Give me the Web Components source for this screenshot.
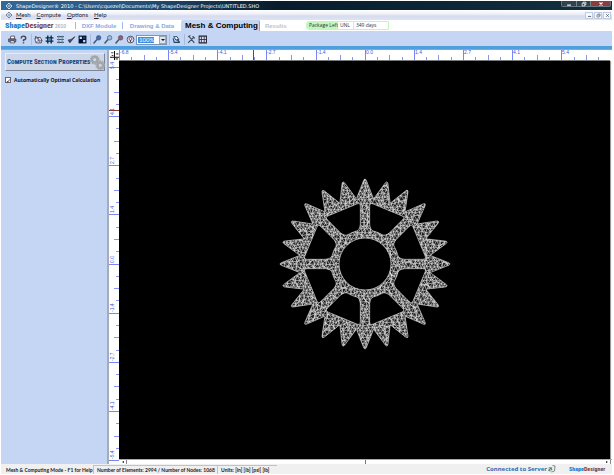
<!DOCTYPE html>
<html lang="en">
<head>
<meta charset="utf-8">
<title>ShapeDesigner 2010</title>
<style>
html,body{height:100%}
body{margin:0;background:#fff;font:6px/8px Lato,"Open Sans",sans-serif;color:#223}
</style>
</head>
<body>
<sd-app></sd-app>
<script>
const ICONS={
app:'<path d="M8 2 L10 5 14 8 11 11 8 14 5 11 2 8 5 5Z" fill="none" stroke="currentColor" stroke-width="1.6"/><circle cx="8" cy="8" r="2" fill="none" stroke="currentColor"/>',
print:'<path d="M5 2h7l-1 5H4Z" fill="#fff" stroke="#334" stroke-width="1.3"/><path d="M1 7h13v5H1Z" fill="#778" stroke="#223"/><path d="M4 10h7l1 4H4Z" fill="#dde" stroke="#223"/>',
help:'<path d="M4 6Q4 2 8 2t4 4Q12 8 8 9v2M8 13v2" fill="none" stroke="#445" stroke-width="2.6"/>',
mesh:'<path d="M3 2l3 3 5-1 3 5-1 5H4L2 9Z" fill="#eef" stroke="#445" stroke-width="1.5"/><path d="M1 7l6-3 2 5 6 1M3 14l5-5 4 4M5 4l5 9" fill="none" stroke="#445" stroke-width="1.2"/>',
grid:'<path d="M5 1v14M11 1v14M1 5h14M1 11h14" stroke="#123" stroke-width="2.4"/><path d="M6 6h4v4H6z" fill="#38c"/>',
lines:'<path d="M2 3h12M2 8h12M2 13h12" stroke="#456" stroke-width="2.2"/><path d="M5 1v14M11 1v14" stroke="#68a" stroke-width="1.5"/>',
check:'<path d="M2 9l3 5 9-11-7 5Z" fill="#445" stroke="#445" stroke-width="1.5"/>',
blocks:'<path d="M1 1h14v14H1z" fill="#001133"/><path d="M3 3h4v4H3zM9 9h4v4H9z" fill="#bde"/><path d="M9 3h4v4H9z" fill="#246"/>',
zin:'<circle cx="10" cy="5" r="4" fill="#3a6fc0" stroke="#345"/><path d="M7 8L1 15" stroke="#456" stroke-width="2.6"/>',
zout:'<circle cx="10" cy="5" r="4" fill="#9bd" stroke="#345"/><path d="M7 8L1 15" stroke="#456" stroke-width="2.6"/>',
zwin:'<circle cx="10" cy="5" r="4" fill="#867" stroke="#534"/><path d="M7 8L1 15" stroke="#456" stroke-width="2.6"/>',
fit:'<circle cx="8" cy="8" r="6" fill="#eef" stroke="#445" stroke-width="1.6"/><circle cx="8" cy="7" r="2.6" fill="none" stroke="#445" stroke-width="1.4"/><path d="M8 9v4" stroke="#445" stroke-width="2"/>',
run:'<path d="M3 3h6l3 5-5 1Z" fill="#fff" stroke="#246" stroke-width="1.7"/><path d="M2 6l2 7h10M9 8l4 4" fill="none" stroke="#246" stroke-width="2"/>',
tools:'<path d="M2 14L12 4M4 3l9 11M2 3l4-2M10 2l4 4" stroke="#456" stroke-width="2.2" fill="none"/>',
table:'<path d="M2 2h13v12H2z" fill="#dde6f6" stroke="#223" stroke-width="1.8"/><path d="M2 8h13M6 2v12M11 2v12" stroke="#334" stroke-width="1.6"/>',
gears:'<g fill="none" stroke="#a3a5a8"><circle cx="5" cy="5" r="3" stroke-width="2.6"/><circle cx="5" cy="5" r="4.6" stroke-width="1.4" stroke-dasharray="1.6 1.3"/><circle cx="11" cy="11" r="3" stroke-width="2.6"/><circle cx="11" cy="11" r="4.6" stroke-width="1.4" stroke-dasharray="1.6 1.3"/></g>',
origin:'<path d="M8 0v16M0 11h16" stroke="#111" stroke-width="1.8"/><path d="M2 3h4M11 5h4M3 8h3M10 14h4" stroke="#444" stroke-width="2"/>',
server:'<path d="M2 5h8v7H2z" fill="#cdd" stroke="#567"/><path d="M9 1l5 1-1 10-6 2" fill="#eee" stroke="#456" stroke-width="1.3"/><path d="M1 12l5-6 2 4" stroke="#262" fill="none" stroke-width="1.6"/>',
min:'<path d="M3 11h10" stroke="currentColor" stroke-width="3"/>',
max:'<path d="M3 6h7v7H3zM6 6V3h7v7h-3" fill="none" stroke="currentColor" stroke-width="2"/>',
close:'<path d="M4 4l8 8M12 4l-8 8" stroke="currentColor" stroke-width="3"/>'
};
const define=(name,html,setup)=>customElements.define(name,class extends HTMLElement{
  connectedCallback(){
    if(this.shadowRoot)return;
    const t=document.createElement('template');
    t.innerHTML='<style>*{box-sizing:border-box}button{font:inherit;color:inherit;border:0;background:none;padding:0;margin:0;white-space:nowrap}</style>'+html;
    this.attachShadow({mode:'open'}).append(t.content.cloneNode(true));
    if(setup)setup(this,this.shadowRoot);
  }
});

define('sd-icon','<style>:host{display:inline-block;flex:none;width:8px;height:8px}svg{display:block;width:100%;height:100%}</style><svg viewBox="0 0 16 16" aria-hidden="true"></svg>',
(el,r)=>{r.querySelector('svg').innerHTML=ICONS[el.getAttribute('name')];});

define('sd-logo',`<style>:host{display:inline-block;font:bold 8px/10px "Liberation Sans Narrow","Roboto Condensed","Liberation Sans",sans-serif;white-space:nowrap;color:#743c42}b{color:#2b80cb}</style><b>Shape</b>Designer`);

define('sd-titlebar',`<style>
:host{display:flex;align-items:center;height:9px;padding:0 1px 0 4px;gap:3px;background:linear-gradient(90deg,#33689a 0,#275681 20%,#153450 34%,#081c2c 45%,#0c2534 70%,#14303f);color:#fff}
span{flex:1;white-space:nowrap;overflow:hidden;font:5px/8px "DejaVu Sans",sans-serif}
div{display:flex;align-self:flex-start;height:6px;border:1px solid #647681;border-top:0;border-radius:0 0 2px 2px}
button{width:14px;height:5px;display:grid;place-items:center;background:#33434d}
button+button{border-left:1px solid #78868e}
button:last-child{width:20px;background:#8d3c3b}
div sd-icon{width:6px;height:6px}
</style><sd-icon name="app"></sd-icon><span>ShapeDesigner® 2010 - C:\\Users\\cquezel\\Documents\\My ShapeDesigner Projects\\UNTITLED.SHO</span>
<div><button aria-label="Minimize"><sd-icon name="min"></sd-icon></button><button aria-label="Restore"><sd-icon name="max"></sd-icon></button><button aria-label="Close"><sd-icon name="close"></sd-icon></button></div>`);

define('sd-menubar',`<style>
:host{display:flex;align-items:center;height:10px;padding:0 1px 0 4px;background:linear-gradient(#fff,#eef0f8 40%,#d6dcee 60%,#dfe4f3);color:#223}
nav{flex:1;display:flex;gap:6px;padding-left:3px}
u{text-underline-offset:1px}
.w{display:flex;gap:1px}.w button{display:grid;place-items:center;width:8px;height:7px;background:#f6f9ff;border:1px solid #c1cbe0;color:#567}
.w sd-icon{width:5px;height:5px}
</style><sd-icon name="app" style="color:#568"></sd-icon><nav><button><u>M</u>esh</button><button><u>C</u>ompute</button><button><u>O</u>ptions</button><button><u>H</u>elp</button></nav>
<div class="w"><button aria-label="Minimize window"><sd-icon name="min"></sd-icon></button><button aria-label="Restore window"><sd-icon name="max"></sd-icon></button><button aria-label="Close window"><sd-icon name="close"></sd-icon></button></div>`);

define('sd-tabs',`<style>
:host{display:flex;align-items:center;height:11px;padding-left:4px;background:#fff;white-space:nowrap;font:bold 6px/8px "Liberation Sans",sans-serif;color:#86abe6}
sd-logo{width:50px}
.y{width:20px;color:#b5b5b5;font:bold 5px/8px "Liberation Sans Narrow","Liberation Sans",sans-serif}
.s{width:1px;height:7px;background:#9dbbe9}
.t{height:11px}
.t.a{align-self:stretch;padding:0 1px 0 4px;font-size:8px;color:#000;background:#c5d6f4;border-radius:2px 2px 0 0;border-right:1px solid #6cb0e8}
.t.off{color:#c4c4c4;width:21px}
.p{display:flex;height:9px;margin-left:20px;font:5px/7px "Open Sans",sans-serif;color:#333;background:#c3f6bf;border-radius:4px 1px 1px 4px;padding:1px;padding-left:3px}
.p span{background:#fff;padding:0 2px;margin-left:1px;width:15px}
.p span+span{width:34px}
.p i{font-style:normal;width:28px}
</style><sd-logo></sd-logo><span class="y">2010</span><span class="s"></span><button class="t" style="width:46px">DXF Module</button><span class="s"></span><button class="t" style="width:58px">Drawing &amp; Data</button><button class="t a">Mesh &amp; Computing</button><button class="t off" style="margin-left:5px">Results</button>
<div class="p"><i>Package Left</i><span>UNL</span><span>349 days</span></div>`);

define('sd-toolbar',`<style>
:host{display:flex;align-items:center;height:15px;padding:2px 0 0 6px;background:#c5d6f4}
button{display:grid;place-items:center;width:11px;height:11px}
sd-icon{width:9px;height:9px}
.g{display:flex}.g+.g{border-left:1px solid #a9bbdd;margin-left:2px;padding-left:1px}
select{appearance:none;width:31px;height:10px;border:1px solid #7e93b8;border-radius:0;padding:0 0 0 2px;margin:0;font:6px/8px Lato,"Open Sans",sans-serif;color:#fff;background:linear-gradient(#3f8bdc,#3f8bdc) 1px 1px/16px 6px no-repeat,#fff}
.z{display:grid;grid-template:1fr/1fr auto;align-items:center}
.z select{grid-area:1/1/2/3}.z i{grid-area:1/2;width:7px;height:8px;margin-right:1px;background:#dfe5ee;border:1px solid #9aa;display:grid;place-items:center;pointer-events:none}
.z i::after{content:"";border:2px solid transparent;border-top-color:#111;border-bottom:0}
</style>
<div class="g"><button aria-label="Print"><sd-icon name="print"></sd-icon></button><button aria-label="Help"><sd-icon name="help"></sd-icon></button></div>
<div class="g"><button aria-label="Mesh"><sd-icon name="mesh"></sd-icon></button><button aria-label="Grid"><sd-icon name="grid"></sd-icon></button><button aria-label="Lines"><sd-icon name="lines"></sd-icon></button><button aria-label="Check"><sd-icon name="check"></sd-icon></button><button aria-label="Colors"><sd-icon name="blocks"></sd-icon></button></div>
<div class="g"><button aria-label="Zoom in"><sd-icon name="zin"></sd-icon></button><button aria-label="Zoom out"><sd-icon name="zout"></sd-icon></button><button aria-label="Zoom window"><sd-icon name="zwin"></sd-icon></button><button aria-label="Fit"><sd-icon name="fit"></sd-icon></button><label class="z"><select aria-label="Zoom"><option>100%</option></select><i></i></label></div>
<div class="g"><button aria-label="Compute"><sd-icon name="run"></sd-icon></button></div>
<div class="g"><button aria-label="Settings"><sd-icon name="tools"></sd-icon></button><button aria-label="Table"><sd-icon name="table"></sd-icon></button></div>`);

define('sd-sidebar',`<style>
:host{display:block;width:108px;padding:3px 2px 0 4px;background:#c5d6f4;border-right:2px solid #a4acb9}
.h{display:flex;align-items:center;justify-content:space-between;width:100%;height:18px;padding:0 1px;background:#ccd6e6;border:1px solid #e4ecf8;border-right-color:#7d8797;border-bottom-color:#7d8797;color:#22477f;font:bold small-caps 7px/10px "Liberation Sans Narrow","Roboto Condensed","Liberation Sans",sans-serif}
.h sd-icon{width:15px;height:15px}
label{display:flex;align-items:center;gap:3px;margin-top:6px;font:bold 5px/6px "Open Sans",sans-serif;color:#112;white-space:nowrap}
input{appearance:none;width:6px;height:6px;margin:0;border:1px solid #667;background:#fff;display:grid;place-items:center}
input:checked::after{content:"✓";font:bold 6px/6px "DejaVu Sans";color:#000}
</style><button class="h"><span>Compute Section Properties</span><sd-icon name="gears"></sd-icon></button>
<label><input type="checkbox" checked>Automatically Optimal Calculation</label>`);

define('sd-ruler',`<style>:host{display:block;overflow:hidden;background:#fff;min-width:0;min-height:0;contain:strict}svg{display:block;overflow:visible}text{font:5px "Liberation Sans",sans-serif;fill:#4456dc}</style><svg width="10" height="10"></svg>`,
(el,r)=>{
  const v=el.hasAttribute('vertical'),first=+el.getAttribute('first'),labels=el.getAttribute('labels').split(' ');
  let s='';
  const line=(p,a,c)=>v?`<rect x="${10-a}" y="${p}" width="${a}" height="1" fill="${c}"/>`:`<rect x="${p}" y="${10-a}" width="1" height="${a}" fill="${c}"/>`;
  for(let i=0;i<160;i++){
    const p=Math.round(first+i*49.15/4);
    s+=line(p,i%4===0?10:i%2===0?5:3,i%4===0?'#7885f2':'#8994f0');
    if(i%4===0&&labels[i/4])s+=v?`<text transform="translate(5 ${Math.max(p-1,8)}) rotate(-90)">${labels[i/4]}</text>`:`<text x="${p+1}" y="4">${labels[i/4]}</text>`;
  }
  s+=line(+el.getAttribute('cursor'),10,'#8c3940');
  r.querySelector('svg').innerHTML=s;
});

define('sd-gear',`<style>:host{display:block}svg{display:block;width:174px;height:174px}</style>
<svg viewBox="-87 -87 174 174" role="img" aria-label="Meshed gear section"></svg>`,
(el,r)=>{
  const P=(a,d)=>[Math.sin(a)*d,-Math.cos(a)*d],f=p=>p[0].toFixed(2)+' '+p[1].toFixed(2),D=Math.PI/180;
  let shape='';
  for(let i=0;i<24;i++){
    const a=i*15*D;
    shape+=(i?'L':'M')+f(P(a-6.9*D,67))+'L'+f(P(a-1.1*D,83))+'Q'+f(P(a,87))+' '+f(P(a+1.1*D,83))+'L'+f(P(a+6.9*D,67))+'Q'+f(P(a+7.5*D,65.5))+' '+f(P(a+8.1*D,67));
  }
  shape+='Z';
  for(let k=0;k<8;k++){
    const c=(k*45+22.5)*D,h=(o,d)=>P(c+o*D,d);
    shape+='M'+f(h(-15.8,40))+'L'+f(h(-17.9,58))+'Q'+f(h(-18,62))+' '+f(h(-14.5,60.5))+'L'+f(h(14.5,60.5))+'Q'+f(h(18,62))+' '+f(h(17.9,58))+'L'+f(h(15.8,40))+'Q'+f(h(13.5,34))+' '+f(h(8,34))+'A34 34 0 0 0 '+f(h(-8,34))+'Q'+f(h(-13.5,34))+' '+f(h(-15.8,40))+'Z';
  }
  shape+='M26 0A26 26 0 1 0 -26 0A26 26 0 1 0 26 0Z';
  let seed=7;const rnd=()=>(seed=(seed*16807)%2147483647)/2147483647-.5;
  const n=56,s=3.2,g=[];
  for(let y=0;y<n;y++){g.push([]);for(let x=0;x<n;x++)g[y].push([(x-n/2+(y%2)/2)*s+rnd()*2.8,(y-n/2)*s+rnd()*2.8]);}
  let m='';
  for(let y=0;y<n-1;y++)for(let x=1;x<n-1;x++){
    const o=y%2;m+='M'+f(g[y][x])+'L'+f(g[y][x+1])+'M'+f(g[y+1][x+o-1])+'L'+f(g[y][x])+'L'+f(g[y+1][x+o]);
  }
  r.querySelector('svg').innerHTML=`<defs><clipPath id="c"><path d="${shape}" clip-rule="evenodd"/></clipPath></defs><path d="${shape}" fill="#1c1c1c" fill-rule="evenodd"/><path clip-path="url(#c)" d="${m}" fill="none" stroke="#f0f0f0" stroke-width=".6"/><path d="${shape}" fill="none" stroke="#d0d0d0" stroke-width=".7"/>`;
});

define('sd-workspace',`<style>
:host{display:grid;grid-template:11px minmax(0,1fr) 5px/10px minmax(0,1fr) 2px;min-width:0;background:#fff}
.o{display:grid;place-items:center;background:#fff}
.o sd-icon{width:9px;height:9px}
.top{border-bottom:1px solid #777}
.v{grid-row:2/4}
.c{background:#000;display:grid;place-items:center;overflow:hidden;padding-top:7px}
.r{background:#f4f4f4;border-left:1px solid #999}
.hs{grid-area:3/2/4/4;display:flex;justify-content:space-between;align-items:center;border-top:1px solid #aaa;padding:0 1px}
.hs button{width:7px;height:4px;border-right:1px solid #888;display:flex;align-items:center;justify-content:center}
.hs button::after{content:"";border:1px solid transparent;border-right:2px solid #111;border-left:0}
.hs button:last-child::after{border-right:0;border-left:2px solid #111}
.hs i{width:1px;height:4px;background:#777}
</style><div class="o"><sd-icon name="origin"></sd-icon></div>
<sd-ruler class="top" first="0" cursor="134" labels="-6.8 -5.4 -4.1 -2.7 -1.4 0.0 1.4 2.7 4.1 5.4"></sd-ruler><div></div>
<sd-ruler class="v" vertical first="6" cursor="49" labels="5.4 4.1 2.7 1.4 0.0 -1.4 -2.7 -4.1 -5.4"></sd-ruler>
<div class="c"><sd-gear></sd-gear></div><div class="r"></div>
<div class="hs"><button aria-label="Scroll left"></button><i></i><button aria-label="Scroll right"></button></div>`);

define('sd-status',`<style>
:host{display:flex;align-items:center;height:10px;padding-left:5px;background:#f0f0f0;font:bold 5px/8px Lato,"Liberation Sans",sans-serif;color:#222;white-space:nowrap}
span{height:9px;line-height:10px}
.a{width:87px}.b{border:1px solid #c2c2c2;border-right:0;border-bottom:0;padding-left:3px;line-height:8px}
.n{width:124px}.u{width:60px}
.s{margin-left:auto;font:bold 6px/9px "Noto Sans",sans-serif;color:#2e6db0}
sd-icon{margin:0 13px 0 1px}
sd-logo{width:43px;font-size:6px}
</style><span class="a">Mesh &amp; Computing Mode - F1 for Help</span><span class="b n">Number of Elements: 2994 / Number of Nodes: 1068</span><span class="b u">Units: [in] [lb] [psi] [lb]</span><span class="s">Connected to Server</span><sd-icon name="server"></sd-icon><sd-logo></sd-logo>`);

define('sd-app',`<style>
:host{display:flex;flex-direction:column;height:100vh;box-sizing:border-box;padding:1px 2px 1px 1px}
.bar{height:4px;flex:none;background:linear-gradient(#4f9edd 75%,#8fc0ec)}
main{flex:1;display:flex;min-height:0}
sd-workspace{flex:1}sd-sidebar,sd-titlebar,sd-menubar,sd-tabs,sd-toolbar,sd-status{flex:none;box-sizing:border-box}
</style><sd-titlebar></sd-titlebar><sd-menubar></sd-menubar><sd-tabs></sd-tabs><sd-toolbar></sd-toolbar><div class="bar"></div>
<main><sd-sidebar></sd-sidebar><sd-workspace></sd-workspace></main><sd-status></sd-status>`);
</script>
</body>
</html>
